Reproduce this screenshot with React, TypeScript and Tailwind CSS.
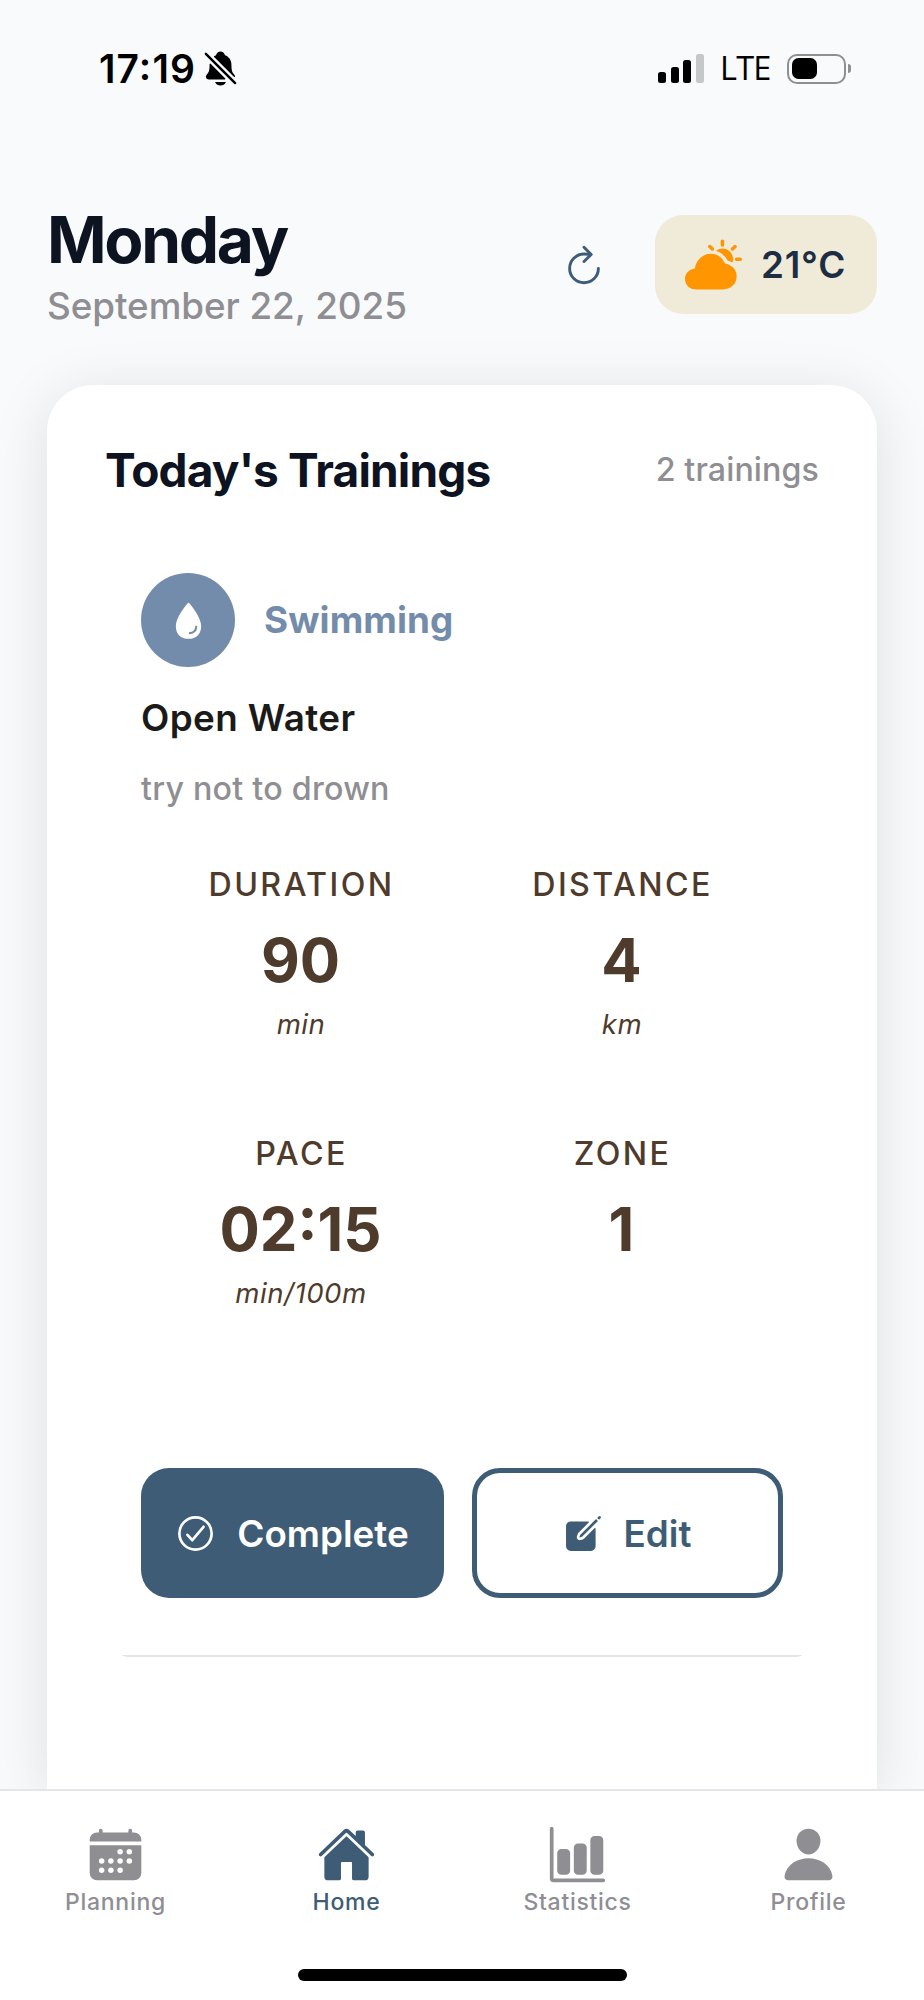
import type { ReactNode } from "react";
import type { IconType } from "react-icons";
import {
  IoBarChart,
  IoCalendar,
  IoCheckmarkCircleOutline,
  IoCreate,
  IoHome,
  IoNotificationsOff,
  IoPartlySunny,
  IoPerson,
  IoRefresh,
  IoWater,
} from "react-icons/io5";
import clsx from "clsx";

type Metric = { label: string; value: string; unit?: string };

const metrics: Metric[] = [
  { label: "Duration", value: "90", unit: "min" },
  { label: "Distance", value: "4", unit: "km" },
  { label: "Pace", value: "02:15", unit: "min/100m" },
  { label: "Zone", value: "1" },
];

const tabs: { label: string; icon: IconType; active?: boolean }[] = [
  { label: "Planning", icon: IoCalendar },
  { label: "Home", icon: IoHome, active: true },
  { label: "Statistics", icon: IoBarChart },
  { label: "Profile", icon: IoPerson },
];

// Lifts the colon so it sits centred between the digits
function Digits({ value }: { value: string }) {
  const [head, tail] = value.split(":");
  if (tail === undefined) return <>{value}</>;
  return (
    <>
      {head}
      <span className="relative -top-[0.09em]">:</span>
      {tail}
    </>
  );
}

function StatusBar() {
  return (
    <div className="flex h-[137px] shrink-0 items-center justify-between pr-[73px] pl-[99px] text-black">
      <div className="flex items-center gap-[5px]">
        <span className="text-[39px] leading-none font-semibold tracking-[1.1px]">
          <Digits value="17:19" />
        </span>
        <IoNotificationsOff className="size-[39px]" />
      </div>
      <div className="flex items-center">
        <div className="flex items-end gap-[4.6px]">
          <div className="h-[11px] w-[8px] rounded-[2.5px] bg-black" />
          <div className="h-[16px] w-[8px] rounded-[2.5px] bg-black" />
          <div className="h-[23px] w-[8px] rounded-[2.5px] bg-black" />
          <div className="h-[29px] w-[8px] rounded-[2.5px] bg-[#c6c7c9]" />
        </div>
        <span className="ml-[16px] w-[50px] font-['Open_Sans',sans-serif] text-[32.5px] leading-none font-medium tracking-[-0.8px]">
          LTE
        </span>
        <div className="ml-[17px] h-[30px] w-[59px] rounded-[10px] border-2 border-[#8f8f91] p-[2.5px]">
          <div className="h-full w-[25px] rounded-[6.5px] bg-black" />
        </div>
        <div className="ml-[2px] h-[9px] w-[3px] rounded-r-full bg-[#8f8f91]" />
      </div>
    </div>
  );
}

function Header() {
  return (
    <header className="flex items-start justify-between px-[47px] pt-[72px]">
      <div className="h-[118px] pt-px">
        <h1 className="text-[64px] leading-[60px] font-bold tracking-[-2.3px] text-[#0d1321]">Monday</h1>
        <p className="mt-[14px] text-[36.8px] leading-[44px] font-medium tracking-[-0.05px] text-[#8e8e93]">September 22, 2025</p>
      </div>
      <div className="mt-[6px] flex items-center">
        <IoRefresh className="mr-[48px] size-[46px] text-[#3e5c76]" />
        <div className="flex h-[99px] w-[222px] items-center rounded-[28px] bg-[#f0ebd8] pl-[30px]">
          <IoPartlySunny className="size-[57px] text-[#ff9500]" />
          <span className="ml-[19px] pt-px text-[36.8px] leading-none font-semibold tracking-[0.8px] text-[#1d2d44]">21°C</span>
        </div>
      </div>
    </header>
  );
}

function MetricCell({ label, value, unit }: Metric) {
  return (
    <div className="flex h-[176px] flex-col items-center text-[#4e3b2c]">
      <span className="text-[32.2px] leading-[42px] font-medium tracking-[2.4px] uppercase">{label}</span>
      <span className="mt-[18px] pr-[2px] text-[59.8px] leading-[72px] font-bold">
        <Digits value={value} />
      </span>
      {unit && <span className="mt-[11px] pr-px text-[27.6px] leading-[34px] tracking-[0.5px] italic">{unit}</span>}
    </div>
  );
}

function ActionButton({ icon: Icon, primary, children }: { icon: IconType; primary?: boolean; children: ReactNode }) {
  return (
    <button
      className={clsx(
        "flex h-[130px] items-center justify-center rounded-[28px] pt-px pr-[2px] text-[36.8px] font-semibold",
        primary ? "w-[303px] gap-[20px] bg-[#3e5c76] text-white" : "w-[311px] gap-[19px] border-[5px] border-[#3e5c76] text-[#3e5c76]"
      )}
    >
      <Icon className="size-[43px]" />
      {children}
    </button>
  );
}

function TrainingItem() {
  return (
    <section className="mx-[75px] mt-[73px]">
      <div className="px-[19px]">
        <div className="flex items-center gap-[29px]">
          <div className="flex size-[94px] items-center justify-center rounded-full bg-[#748cab]">
            <IoWater className="size-[45px] text-white" />
          </div>
          <span className="text-[36.8px] leading-none font-bold tracking-[0.1px] text-[#748cab]">Swimming</span>
        </div>
        <h3 className="mt-[29px] text-[36.8px] leading-[44px] font-semibold tracking-[0.4px] text-[#1a1a1a]">Open Water</h3>
        <p className="mt-[29px] text-[32.2px] leading-[40px] font-medium tracking-[0.25px] text-[#8e8e93]">try not to drown</p>
        <div className="mt-[55px] grid grid-cols-2 gap-y-[93px]">
          {metrics.map((metric) => (
            <MetricCell key={metric.label} {...metric} />
          ))}
        </div>
        <div className="mt-[159px] flex justify-between">
          <ActionButton icon={IoCheckmarkCircleOutline} primary>Complete</ActionButton>
          <ActionButton icon={IoCreate}>Edit</ActionButton>
        </div>
      </div>
      <div className="mt-[57px] h-[2px] bg-[#e5e5e5] [border-radius:0_0_9px_9px/0_0_2px_2px]" />
    </section>
  );
}

function TabBar() {
  return (
    <nav className="h-[211px] shrink-0 border-t-2 border-[#e5e5ea] bg-white">
      <div className="grid h-[178px] grid-cols-4 pt-[34px]">
        {tabs.map(({ label, icon: Icon, active }) => (
          <div key={label} className={clsx("flex flex-col items-center", active ? "text-[#3e5c76]" : "text-[#8e8e93]")}>
            <Icon className="size-[59px]" />
            <span className="mt-[3px] text-[23px] leading-[30px] font-medium tracking-[0.7px]">{label}</span>
          </div>
        ))}
      </div>
      <div className="mx-auto h-[12px] w-[329px] rounded-full bg-black" />
    </nav>
  );
}

export default function App() {
  return (
    <div className="flex h-[2000px] w-[924px] flex-col overflow-hidden bg-[#f8fafc] font-['Inter',sans-serif] antialiased">
      <main className="flex min-h-0 flex-1 flex-col overflow-hidden">
        <StatusBar />
        <Header />
        <div className="mx-[47px] mt-[58px] flex-1 rounded-t-[46px] bg-white pt-[55px] shadow-[0_9px_60px_rgba(0,0,0,0.11)]">
          <div className="flex h-[60px] items-center justify-between px-[58px]">
            <h2 className="text-[46px] leading-none font-bold tracking-[-0.85px] text-[#0d1321]">Today's Trainings</h2>
            <span className="text-[32.2px] leading-none font-medium tracking-[0.1px] text-[#8e8e93]">2 trainings</span>
          </div>
          <TrainingItem />
        </div>
      </main>
      <TabBar />
    </div>
  );
}
